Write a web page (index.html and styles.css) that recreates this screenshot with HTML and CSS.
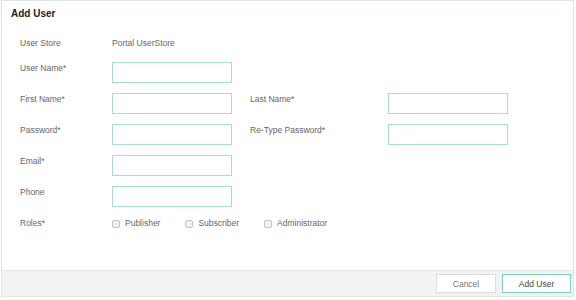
FILE: index.html
```html
<!DOCTYPE html>
<html lang="en">
<head>
    <meta charset="UTF-8">
    <meta name="viewport" content="width=device-width, initial-scale=1.0">
    <title>Add User</title>
    <link rel="stylesheet" href="styles.css">
</head>
<body>
    <div class="panel">
        <!-- Header -->
        <div class="panel-header">
            <h1>Add User</h1>
        </div>

        <!-- Form body -->
        <div class="panel-body">
            <div class="row row-static">
                <div class="field">
                    <label>User Store</label>
                    <span class="value">Portal UserStore</span>
                </div>
            </div>
            <div class="row">
                <div class="field">
                    <label>User Name*</label>
                    <input type="text">
                </div>
            </div>
            <div class="row">
                <div class="field">
                    <label>First Name*</label>
                    <input type="text">
                </div>
                <div class="field field-right">
                    <label>Last Name*</label>
                    <input type="text">
                </div>
            </div>
            <div class="row">
                <div class="field">
                    <label>Password*</label>
                    <input type="password">
                </div>
                <div class="field field-right">
                    <label>Re-Type Password*</label>
                    <input type="password">
                </div>
            </div>
            <div class="row">
                <div class="field">
                    <label>Email*</label>
                    <input type="text">
                </div>
            </div>
            <div class="row">
                <div class="field">
                    <label>Phone</label>
                    <input type="text">
                </div>
            </div>
            <div class="row row-static">
                <div class="field">
                    <label>Roles*</label>
                    <div class="options">
                        <label class="option"><input type="checkbox"> Publisher</label>
                        <label class="option"><input type="checkbox"> Subscriber</label>
                        <label class="option"><input type="checkbox"> Administrator</label>
                    </div>
                </div>
            </div>
        </div>

        <!-- Footer buttons -->
        <div class="panel-footer">
            <button class="btn btn-cancel">Cancel</button>
            <button class="btn btn-primary">Add User</button>
        </div>
    </div>
</body>
</html>
```

FILE: styles.css
```css
* {
    margin: 0;
    padding: 0;
    box-sizing: border-box;
}

body {
    font-family: 'Liberation Sans', Arial, sans-serif;
    background-color: #ffffff;
    color: #666666;
}

.panel {
    margin: 0 2px 0 1px;
    height: 297px;
    border: 1px solid #dfe5e4;
    display: flex;
    flex-direction: column;
    background-color: #ffffff;
}

.panel-header {
    padding: 7px 9px 0;
}

.panel-header h1 {
    font-size: 10px;
    line-height: 12px;
    font-weight: 700;
    color: #222222;
}

.panel-body {
    flex: 1;
    display: flex;
    flex-direction: column;
    gap: 10px;
    padding: 17px 18px 0;
}

.row {
    display: flex;
    height: 21px;
}

.row-static {
    height: 15px;
}

.field {
    display: flex;
    align-items: flex-start;
}

.field > label {
    width: 92px;
    font-size: 8.5px;
    line-height: 11px;
    padding-top: 1px;
    color: #666666;
}

.field-right {
    margin-left: 18px;
}

.field-right > label {
    width: 138px;
}

.value {
    font-size: 8.5px;
    line-height: 11px;
    padding-top: 1px;
    color: #666666;
}

.field input[type="text"],
.field input[type="password"] {
    width: 120px;
    height: 21px;
    border: 1px solid #a7ded4;
    background-color: #ffffff;
    outline: none;
}

/* Roles checkboxes */
.options {
    display: flex;
    gap: 25px;
}

.option {
    display: flex;
    align-items: center;
    gap: 5px;
    font-size: 8.5px;
    line-height: 11px;
    padding-top: 1px;
    color: #666666;
}

.option input {
    appearance: none;
    width: 8px;
    height: 8px;
    border: 1px solid #c4c4c4;
    border-radius: 2px;
    background-color: #f0f0f0;
}

.panel-footer {
    height: 26px;
    border-top: 1px solid #e4e6e6;
    background-color: #f3f3f3;
    display: flex;
    justify-content: flex-end;
    align-items: flex-start;
    gap: 6px;
    padding: 3px 2px 0 0;
}

.btn {
    height: 19px;
    font-family: 'Liberation Sans', Arial, sans-serif;
    font-size: 8.5px;
    background-color: #ffffff;
    cursor: pointer;
}

.btn-cancel {
    width: 60px;
    border: 1px solid #dddddd;
    color: #777777;
}

.btn-primary {
    width: 69px;
    border: 1px solid #7fd1bf;
    color: #444444;
}
```
